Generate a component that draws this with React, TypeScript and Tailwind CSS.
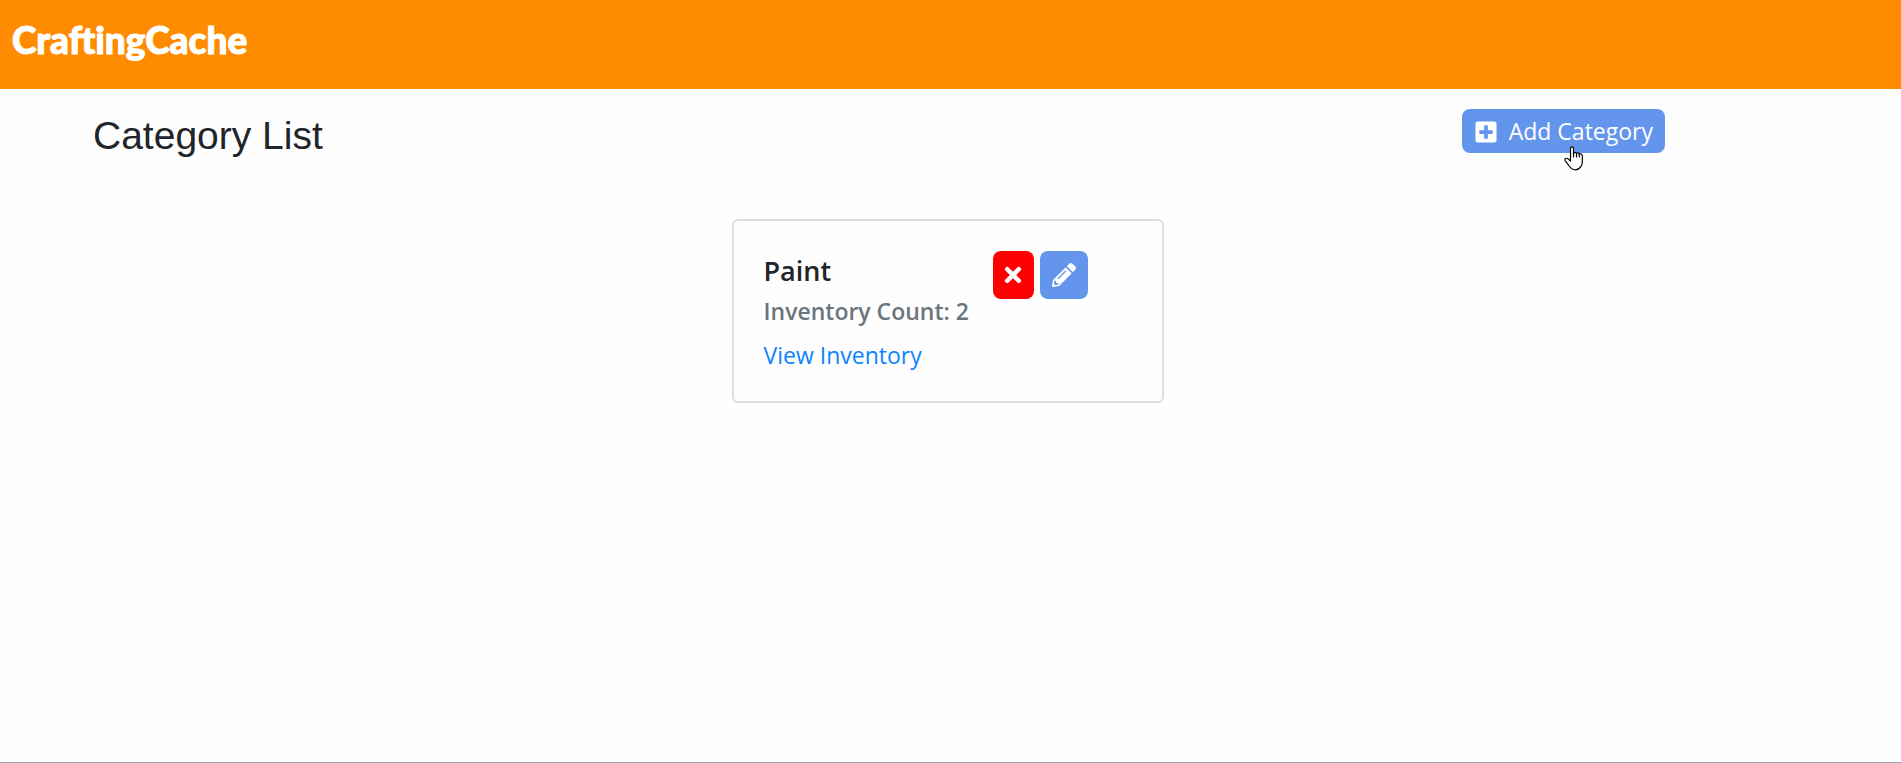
import { FaPencilAlt, FaPlusSquare, FaTimes } from "react-icons/fa";

type Category = { id: number; name: string; count: number };

const categories: Category[] = [{ id: 1, name: "Paint", count: 2 }];

function HandPointer() {
  return (
    <svg
      className="pointer-events-none absolute top-[37px] left-[102px] h-[25px] w-5"
      viewBox="0 0 20 25"
      fill="white"
      stroke="black"
      strokeWidth="1.2"
      strokeLinecap="round"
      strokeLinejoin="round"
      aria-hidden="true"
    >
      <path d="M6.5 15V2.2Q6.5.8 8 .8T9.500 2.200V8Q9.500 6.300 11 6.300T12.500 8Q12.500 6.800 13.900 6.800T15.300 8.600Q15.300 7.600 16.600 7.800T18.300 9.600V16.500Q18.300 19 16.800 20.700Q14.800 23.800 11.500 23.800Q8 23.800 6 21L1.300 14.800Q.4 13.200 1.600 12.500T4.200 13L6.500 15Z" />
      <path d="M9.500 7V11M12.500 8V11M15.300 8.600V11" fill="none" />
    </svg>
  );
}

function CategoryCard({ category }: { category: Category }) {
  return (
    <article className="flex w-[432px] items-start justify-between rounded-md border-2 border-[#dfdfdf] pt-[30px] pr-[74px] pb-[26px] pl-[30px]">
      <div>
        <h2 className="text-[27px] leading-10 font-semibold">{category.name}</h2>
        <p className="text-[23px] leading-10 font-semibold whitespace-nowrap text-[#6c757d]">
          Inventory Count: {category.count}
        </p>
        <a href="#inventory" className="mt-1 block text-[23px] leading-10 text-[#0d83fd]">
          View Inventory
        </a>
      </div>
      <div className="flex gap-1.5">
        <button
          type="button"
          aria-label={`Delete ${category.name}`}
          className="flex h-12 w-[41px] items-center justify-center rounded-lg bg-[#ff0000] text-white"
        >
          <FaTimes className="size-6" />
        </button>
        <button
          type="button"
          aria-label={`Edit ${category.name}`}
          className="flex size-12 items-center justify-center rounded-lg bg-[#6495ed] text-white"
        >
          <FaPencilAlt className="size-6" />
        </button>
      </div>
    </article>
  );
}

export default function App() {
  return (
    <div className="flex min-h-screen flex-col border-b border-[#a5a5a5] bg-[#fefefe] font-['Open_Sans','Noto_Sans',sans-serif] text-[#212529]">
      <header className="bg-[#ff8c00] px-3 pt-4 pb-[25px]">
        <a
          href="#home"
          className="block w-fit font-['Lato',sans-serif] text-[37px] leading-12 font-black text-white [-webkit-text-stroke:1px_white]"
        >
          CraftingCache
        </a>
      </header>
      <main>
        <div className="flex items-start justify-between pt-5 pr-[236px] pl-[93px]">
          <h1 className="font-['Liberation_Sans',sans-serif] text-[39px] leading-[54px]">Category List</h1>
          <button
            type="button"
            className="relative flex h-11 items-center gap-[11px] rounded-lg bg-[#6495ed] px-3 pt-px text-[23px] whitespace-nowrap text-white"
          >
            <FaPlusSquare className="size-6" />
            Add Category
            <HandPointer />
          </button>
        </div>
        <section aria-label="Categories" className="flex justify-center pt-14 pr-1.5">
          {categories.map((category) => (
            <CategoryCard key={category.id} category={category} />
          ))}
        </section>
      </main>
    </div>
  );
}
